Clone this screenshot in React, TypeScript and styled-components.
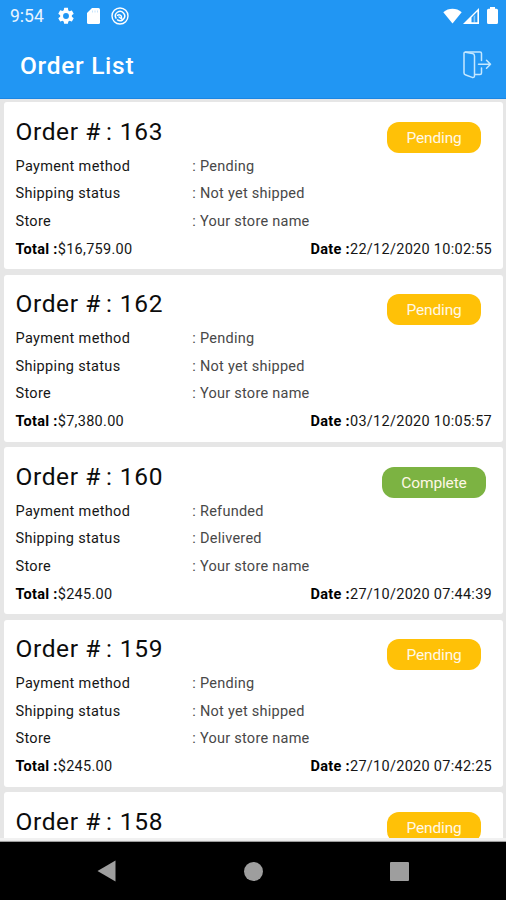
import React from "react";
import styled, { createGlobalStyle } from "styled-components";

const GlobalStyle = createGlobalStyle`
  * { box-sizing: border-box; }
  body { margin: 0; background: #e6e6e6; font-family: Roboto, sans-serif; }
`;

const Screen = styled.div`
  display: flex;
  flex-direction: column;
  width: 506px;
  height: 900px;
  overflow: hidden;
  background: #e6e6e6;
`;

const Header = styled.header`
  flex: none;
  height: 99px;
  background: #2196f3;
  border-bottom: 1px solid #1b86e3;
  color: #fff;
`;

const StatusBar = styled.div`
  display: flex;
  align-items: center;
  justify-content: space-between;
  height: 31px;
  padding: 0 8px 0 10px;
`;

const StatusGroup = styled.div`
  display: flex;
  align-items: center;
`;

const Clock = styled.span`
  width: 47px;
  font-size: 17.5px;
  line-height: 32px;
  letter-spacing: 0;
  color: #e9f5ff;
`;

const Glyph = styled.svg<{ $gap?: number }>`
  display: block;
  margin-right: ${(p) => p.$gap ?? 0}px;
`;

const AppBar = styled.div`
  display: flex;
  align-items: center;
  justify-content: space-between;
  height: 67px;
  padding: 0 14px 0 20px;
`;

const Title = styled.h1`
  margin: 0;
  padding-top: 2px;
  font-size: 24.5px;
  font-weight: 500;
  letter-spacing: 0.7px;
  line-height: 67px;
`;

const List = styled.main`
  flex: none;
  display: flex;
  flex-direction: column;
  gap: 5.5px;
  height: 739px;
  padding: 3.3px 3px 0 4px;
  overflow: hidden;
`;

const Card = styled.article`
  flex: none;
  height: 167px;
  padding: 9.7px 11px 0 11.5px;
  border-radius: 3px;
  background: #fff;
  white-space: nowrap;
`;

const CardHead = styled.div`
  display: flex;
  justify-content: space-between;
  height: 40.8px;
`;

const OrderNumber = styled.h2`
  display: flex;
  margin: 0;
  font-size: 24.5px;
  font-weight: 400;
  line-height: 39px;
  letter-spacing: 0.8px;
  color: #0c0c0c;
`;

const OrderLabel = styled.span`
  width: 90.5px;
  letter-spacing: 0.6px;
`;

const BadgeSlot = styled.div`
  display: flex;
  justify-content: center;
  width: 116px;
  padding-top: 10px;
`;

const Badge = styled.span<{ $complete: boolean }>`
  width: ${(p) => (p.$complete ? 104 : 94)}px;
  height: 31px;
  border-radius: 12px;
  background: ${(p) => (p.$complete ? "#7cb342" : "#ffc107")};
  color: #fff8e6;
  font-size: 15.5px;
  line-height: 32px;
  letter-spacing: -0.15px;
  text-align: center;
`;

const Row = styled.div`
  display: flex;
  height: 27.6px;
  font-size: 14.5px;
  line-height: 27.6px;
  letter-spacing: 0.33px;
  color: #161616;
`;

const Key = styled.span`
  width: 176.8px;
`;

const Value = styled.span`
  letter-spacing: 0.26px;
  color: #484848;
`;

const Footer = styled(Row)`
  justify-content: space-between;
  letter-spacing: 0.28px;

  b {
    font-weight: 700;
    letter-spacing: 0.3px;
    color: #000;
  }
`;

const ListEdge = styled.div`
  flex: none;
  height: 4px;
  background: linear-gradient(#f1f1f1 0 60%, #777);
`;

const NavBar = styled.nav`
  flex: 1;
  display: flex;
  align-items: center;
  justify-content: space-between;
  padding: 0 97px 0 96.5px;
  background: #000;
`;

const NavButton = styled.svg<{ $nudge?: number }>`
  display: block;
  margin-left: ${(p) => p.$nudge ?? 0}px;
`;

type Details = { payment: string; shipping: string; total: string; date: string };
type Order = { id: number; details?: Details };

const orders: Order[] = [
  { id: 163, details: { payment: "Pending", shipping: "Not yet shipped", total: "$16,759.00", date: "22/12/2020 10:02:55" } },
  { id: 162, details: { payment: "Pending", shipping: "Not yet shipped", total: "$7,380.00", date: "03/12/2020 10:05:57" } },
  { id: 160, details: { payment: "Refunded", shipping: "Delivered", total: "$245.00", date: "27/10/2020 07:44:39" } },
  { id: 159, details: { payment: "Pending", shipping: "Not yet shipped", total: "$245.00", date: "27/10/2020 07:42:25" } },
  { id: 158 },
];

function OrderCard({ order }: { order: Order }) {
  const { id, details } = order;
  const complete = details?.shipping === "Delivered";
  return (
    <Card>
      <CardHead>
        <OrderNumber>
          <OrderLabel>Order #</OrderLabel>
          <span>: {id}</span>
        </OrderNumber>
        <BadgeSlot>
          <Badge $complete={complete}>{complete ? "Complete" : "Pending"}</Badge>
        </BadgeSlot>
      </CardHead>
      {details && (
        <>
          <Row><Key>Payment method</Key><Value>: {details.payment}</Value></Row>
          <Row><Key>Shipping status</Key><Value>: {details.shipping}</Value></Row>
          <Row><Key>Store</Key><Value>: Your store name</Value></Row>
          <Footer>
            <span><b>Total :</b>{details.total}</span>
            <span><b>Date :</b>{details.date}</span>
          </Footer>
        </>
      )}
    </Card>
  );
}

export default function App() {
  return (
    <>
      <GlobalStyle />
      <Screen>
        <Header>
          <StatusBar>
            <StatusGroup>
              <Clock>9:54</Clock>
              <Glyph width="18" height="18" viewBox="1 1 22 22" $gap={12}>
                <path fill="#fff" d="M19.14 12.94c.04-.3.06-.61.06-.94s-.02-.64-.07-.94l2.03-1.58a.49.49 0 0 0 .12-.61l-1.92-3.32a.49.49 0 0 0-.59-.22l-2.39.96a7 7 0 0 0-1.62-.94l-.36-2.54A.48.48 0 0 0 13.92 2h-3.84a.48.48 0 0 0-.47.41l-.36 2.54c-.59.24-1.13.57-1.62.94l-2.39-.96a.48.48 0 0 0-.59.22L2.74 8.87a.48.48 0 0 0 .12.61l2.03 1.58a6 6 0 0 0 0 1.88l-2.03 1.58a.49.49 0 0 0-.12.61l1.92 3.32c.12.22.37.29.59.22l2.39-.96c.5.38 1.03.7 1.62.94l.36 2.54c.05.24.24.41.48.41h3.84c.24 0 .44-.17.47-.41l.36-2.54a7 7 0 0 0 1.62-.94l2.39.96c.22.08.47 0 .59-.22l1.92-3.32a.48.48 0 0 0-.12-.61zM12 15.6a3.6 3.6 0 1 1 0-7.2 3.6 3.6 0 0 1 0 7.2z" />
              </Glyph>
              <Glyph width="13" height="16" viewBox="0 0 13 16" $gap={11}>
                <path fill="#fff" d="M5 0h6.5A1.5 1.5 0 0 1 13 1.5v13a1.5 1.5 0 0 1-1.5 1.5h-10A1.5 1.5 0 0 1 0 14.500V5z" />
                <path stroke="#2196f3" strokeWidth="1" opacity=".25" d="M5.500 2.500v2M8 2.500v2M10.500 2.500v2" />
              </Glyph>
              <Glyph width="18" height="18" viewBox="0 0 18 18" fill="none" stroke="#fff" strokeLinecap="round">
                <circle cx="9" cy="9" r="8" strokeWidth="1.400" />
                <path strokeWidth="1.500" d="M5 11.200A4.600 4.600 0 1 1 12.500 12M11.500 13A4.600 4.600 0 0 1 6.500 12.900" />
                <path strokeWidth="1.400" d="M6.500 8.300C8.500 7 10.500 8.300 10.600 10.200M8 10l3.800 2.600" />
              </Glyph>
            </StatusGroup>
            <StatusGroup>
              <Glyph width="19" height="16" viewBox="0 0 19 16" $gap={1}>
                <path fill="#fff" d="M.3 4.200C5.500-.3 13.500-.3 18.700 4.200L9.500 15.500z" />
              </Glyph>
              <Glyph width="16" height="16" viewBox="0 0 16 16" $gap={8}>
                <path fill="#fff" fillRule="evenodd" d="M0 16L16 0v16zM8.500 9.500v4.700h5.900V3.600z" />
                <path fill="#fff" d="M10.600 8.500l1.600-1.600v7.500h-1.600z" opacity=".45" />
              </Glyph>
              <Glyph width="11" height="17" viewBox="0 0 11 17">
                <path fill="#fff" d="M3 0h5v1.800h1.500A1.500 1.500 0 0 1 11 3.300v12.200A1.500 1.500 0 0 1 9.500 17h-8A1.500 1.500 0 0 1 0 15.500V3.300A1.500 1.500 0 0 1 1.500 1.800H3z" />
              </Glyph>
            </StatusGroup>
          </StatusBar>
          <AppBar>
            <Title>Order List</Title>
            <Glyph width="29" height="28" viewBox="0 0 29 28" fill="none" stroke="#c5e8ff" strokeWidth="1.500" strokeLinecap="round" strokeLinejoin="round">
              <path d="M2.500 1H17q1.500 0 1.500 1.500V9.500M18.500 17v5q0 1.500-1.500 1.500h-5" />
              <path d="M2.500 1.200L9.500 2.600q2 .4 2 2.400V24.500q0 2.500-2.300 1.900L2.800 24Q1 23.500 1 22V2.500Q1 1 2.500 1.200z" />
              <path d="M15.500 13.200h12M23.500 9.200l4 4-4 4" />
            </Glyph>
          </AppBar>
        </Header>
        <List>
          {orders.map((o) => <OrderCard key={o.id} order={o} />)}
        </List>
        <ListEdge />
        <NavBar>
          <NavButton width="19" height="22" viewBox="0 0 19 22"><path fill="#9e9e9e" d="M18.500.5v21L.5 11z" /></NavButton>
          <NavButton $nudge={2} width="19" height="19" viewBox="0 0 19 19"><circle cx="9.500" cy="9.500" r="9.500" fill="#9e9e9e" /></NavButton>
          <NavButton width="19" height="19" viewBox="0 0 19 19"><rect width="19" height="19" rx="1" fill="#9e9e9e" /></NavButton>
        </NavBar>
      </Screen>
    </>
  );
}
